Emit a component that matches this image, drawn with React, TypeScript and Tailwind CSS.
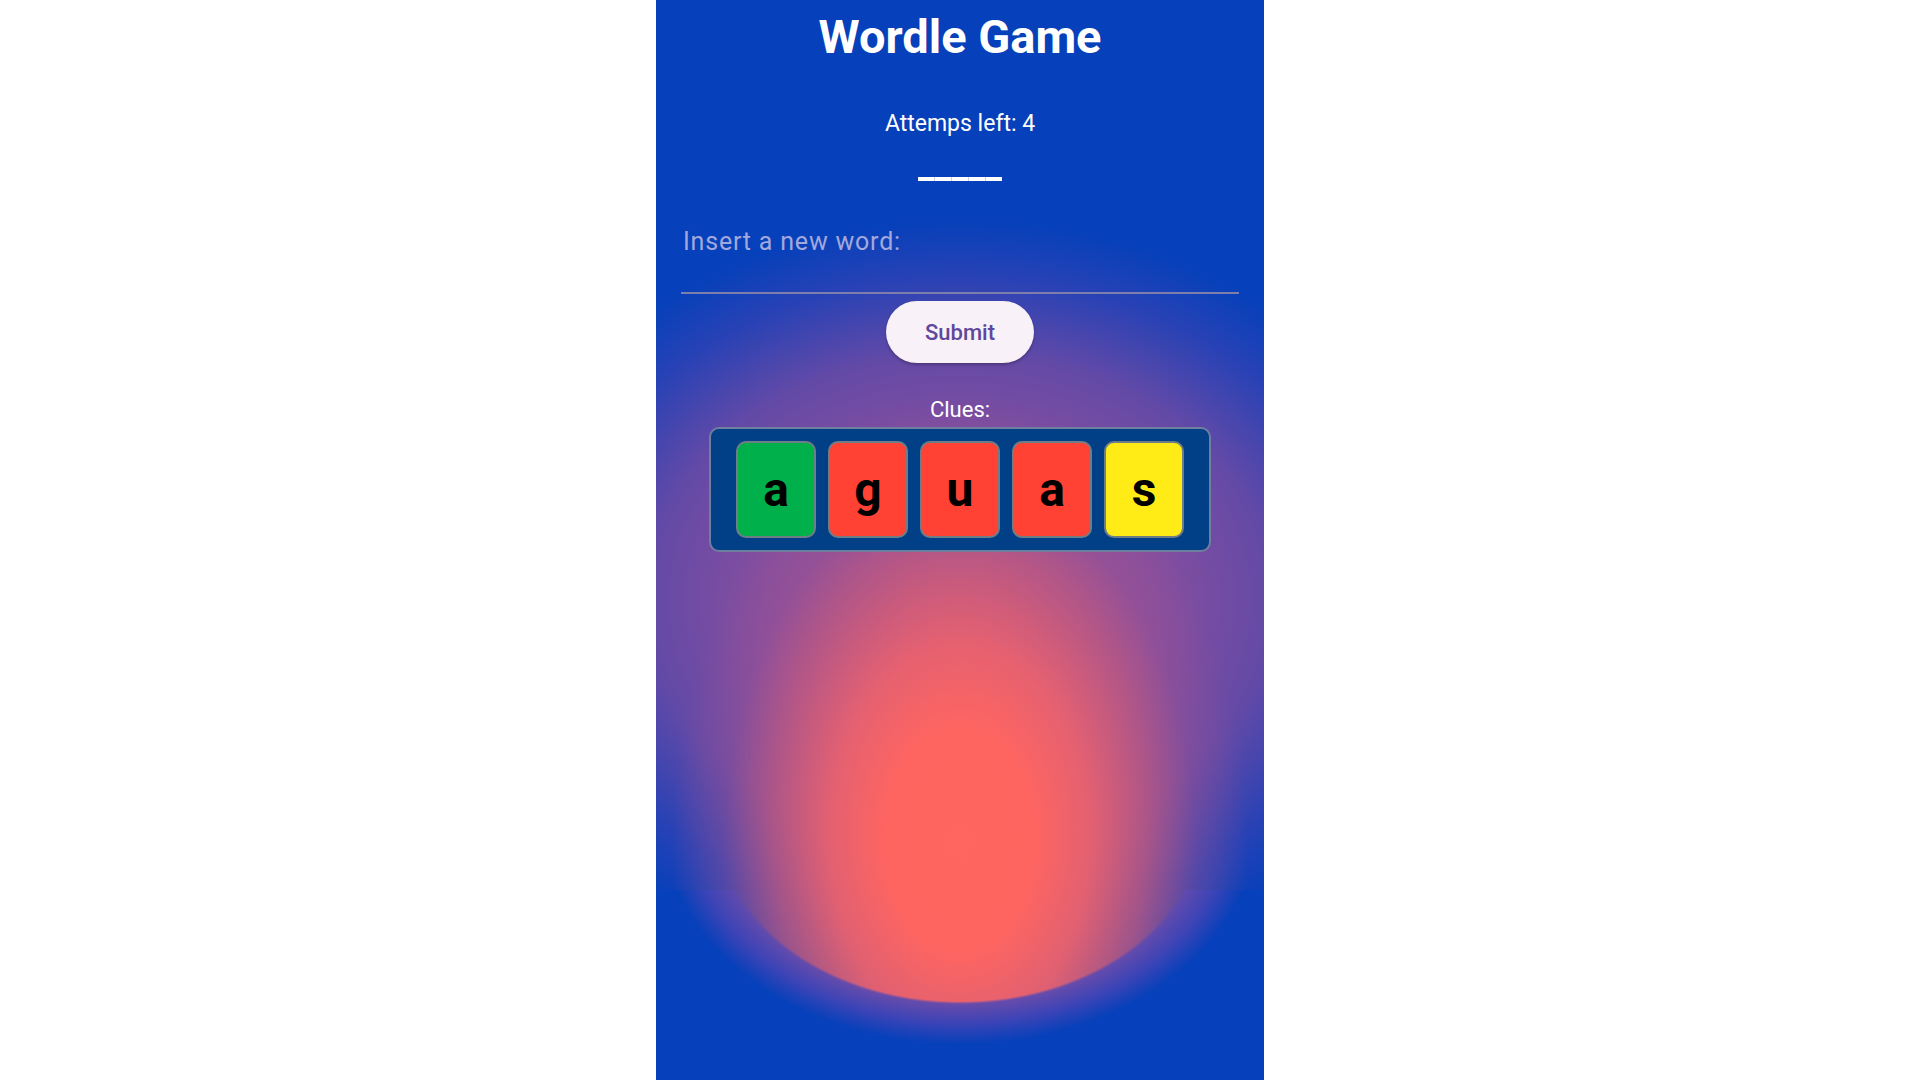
const clues = [
  { letter: 'a', color: 'bg-[#00b04b]' },
  { letter: 'g', color: 'bg-[#ff4233]' },
  { letter: 'u', color: 'bg-[#ff4233]' },
  { letter: 'a', color: 'bg-[#ff4233]' },
  { letter: 's', color: 'bg-[#ffec17]' },
];

function ClueTile({ letter, color }: { letter: string; color: string }) {
  return (
    <div
      className={`flex h-[97px] w-[80px] items-center justify-center rounded-[10px] border-2 border-[#6f7d86] ${color}`}
    >
      <span className="text-[48px] leading-none font-bold text-black">{letter}</span>
    </div>
  );
}

export default function App() {
  return (
    <div className="min-h-[1080px] w-full bg-white font-['Roboto','Liberation_Sans',sans-serif]">
      <main className="mx-auto flex h-[1080px] w-[608px] flex-col items-center overflow-hidden bg-[#0640ba] bg-no-repeat [background-image:radial-gradient(ellipse_245px_184px_at_50%_-70px,transparent_98.5%,rgba(96,74,174,0.95)_100%,rgba(62,68,182,1)_110%,#0640ba_122%),radial-gradient(ellipse_288px_430px_at_50%_840px,#ff665f_0%,#ff6560_25%,rgba(235,98,110,0.95)_45%,rgba(200,90,125,0.75)_65%,rgba(160,82,145,0.4)_82%,transparent_100%),radial-gradient(ellipse_480px_380px_at_50%_600px,rgba(170,85,140,0.95)_0%,rgba(148,80,155,0.9)_40%,rgba(122,76,162,0.8)_65%,rgba(82,68,175,0.45)_85%,transparent_100%)] [background-position:0_890px,0_0,0_0] [background-size:100%_190px,100%_100%,100%_100%]">
        <h1 className="mt-[13px] text-[47px] leading-none font-bold text-white">Wordle Game</h1>

        <p className="mt-[52px] text-[23px] leading-none text-white">Attemps left: 4</p>

        <div className="mt-[42px] flex gap-px bg-[#c9d0ee]">
          {[0, 1, 2, 3, 4].map((i) => (
            <div key={i} className="h-[4px] w-[16px] bg-white" />
          ))}
        </div>

        <label className="mt-[48px] w-[558px] border-b-2 border-[#7d7eac] pb-[38px] pl-[2px] text-[25px] leading-none tracking-[0.8px] text-[#a3a8dc]">
          Insert a new word:
        </label>

        <button
          type="button"
          className="mt-[7px] h-[62px] w-[148px] rounded-full bg-[#f8f1f8] text-[22px] font-medium text-[#5f479a] shadow-[0_2px_3px_rgba(0,0,0,0.25)]"
        >
          Submit
        </button>

        <p className="mt-[36px] text-[22px] leading-none text-white">Clues:</p>

        <div className="mt-[6px] flex gap-[12px] rounded-[10px] border-2 border-[#6f7fa0] bg-[#013f86] px-[25px] py-[12px]">
          {clues.map((c, i) => (
            <ClueTile key={i} letter={c.letter} color={c.color} />
          ))}
        </div>
      </main>
    </div>
  );
}
